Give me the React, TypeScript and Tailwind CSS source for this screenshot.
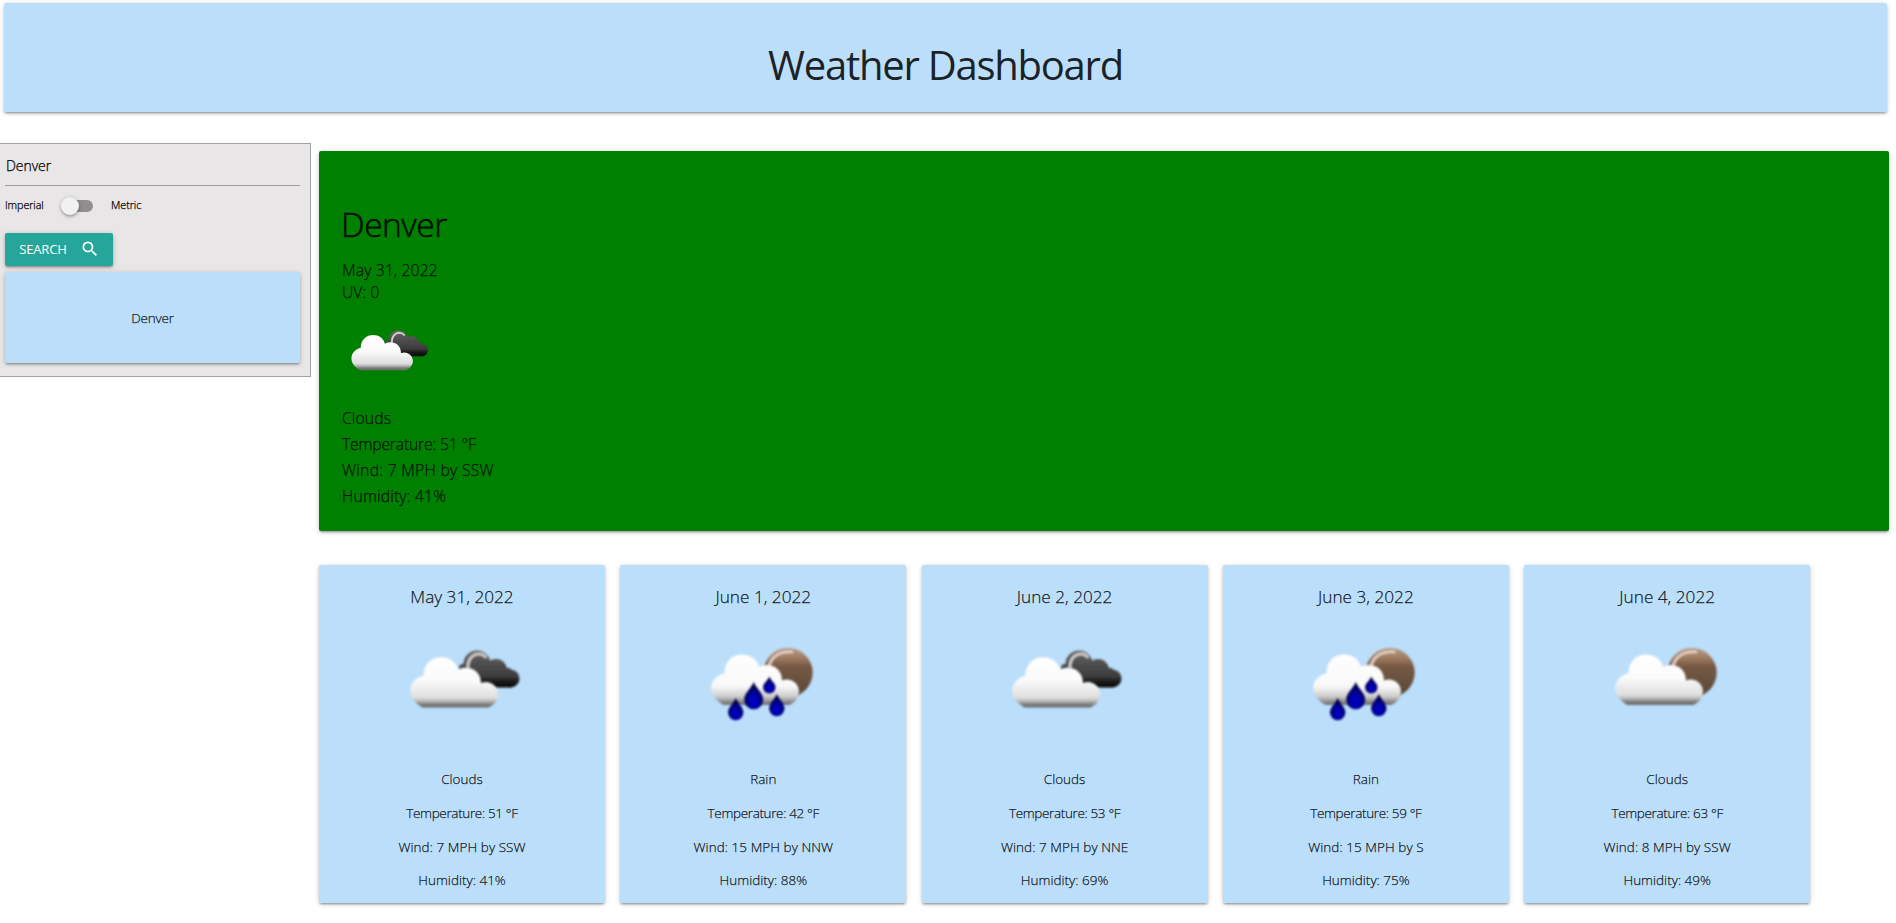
type Kind = 'overcast' | 'rain' | 'broken';

const forecast: { date: string; kind: Kind; label: string; temp: number; wind: string; humidity: number }[] = [
  { date: 'May 31, 2022', kind: 'overcast', label: 'Clouds', temp: 51, wind: '7 MPH by SSW', humidity: 41 },
  { date: 'June 1, 2022', kind: 'rain', label: 'Rain', temp: 42, wind: '15 MPH by NNW', humidity: 88 },
  { date: 'June 2, 2022', kind: 'overcast', label: 'Clouds', temp: 53, wind: '7 MPH by NNE', humidity: 69 },
  { date: 'June 3, 2022', kind: 'rain', label: 'Rain', temp: 59, wind: '15 MPH by S', humidity: 75 },
  { date: 'June 4, 2022', kind: 'broken', label: 'Clouds', temp: 63, wind: '8 MPH by SSW', humidity: 49 },
];

const cardShadow =
  'rounded-[2px] shadow-[0_2px_2px_0_rgba(0,0,0,0.14),0_3px_1px_-2px_rgba(0,0,0,0.12),0_1px_5px_0_rgba(0,0,0,0.2)]';

function Drop({ x, top, r, bottom }: { x: number; top: number; r: number; bottom: number }) {
  const cy = bottom - r;
  return (
    <path
      d={`M${x} ${top} C${x + r * 0.35} ${top + r * 0.8} ${x + r} ${cy - r * 0.7} ${x + r} ${cy} A${r} ${r} 0 0 1 ${x - r} ${cy} C${x - r} ${cy - r * 0.7} ${x - r * 0.35} ${top + r * 0.8} ${x} ${top}Z`}
      fill="url(#drop)"
    />
  );
}

function WeatherIcon({ kind, size }: { kind: Kind; size: number }) {
  const lift = kind === 'overcast' ? 0 : -2.6;
  return (
    <svg width={size} height={size} viewBox="0 0 130 130" className="block shrink-0">
      <defs>
        <linearGradient id="cloud" gradientUnits="userSpaceOnUse" x1="0" y1="27" x2="0" y2="78">
          <stop offset="0" stopColor="#ffffff" />
          <stop offset="0.45" stopColor="#fbfbfb" />
          <stop offset="0.8" stopColor="#dedede" />
          <stop offset="0.87" stopColor="#b4b4b4" />
          <stop offset="0.93" stopColor="#7a7a7a" />
          <stop offset="1" stopColor="#666666" />
        </linearGradient>
        <linearGradient id="rainCloud" gradientUnits="userSpaceOnUse" x1="0" y1="27" x2="0" y2="76">
          <stop offset="0" stopColor="#ffffff" />
          <stop offset="0.65" stopColor="#f8f8f8" />
          <stop offset="0.86" stopColor="#cccccc" />
          <stop offset="1" stopColor="#777777" />
        </linearGradient>
        <linearGradient id="dark" gradientUnits="userSpaceOnUse" x1="0" y1="20" x2="0" y2="58">
          <stop offset="0" stopColor="#686868" />
          <stop offset="0.4" stopColor="#4c4c4c" />
          <stop offset="0.7" stopColor="#3c3c3c" />
          <stop offset="0.85" stopColor="#161616" />
          <stop offset="1" stopColor="#050505" />
        </linearGradient>
        <linearGradient id="sun" x1="0" y1="0" x2="0" y2="1">
          <stop offset="0" stopColor="#b99c88" />
          <stop offset="0.2" stopColor="#a07c62" />
          <stop offset="0.38" stopColor="#755843" />
          <stop offset="0.7" stopColor="#675040" />
          <stop offset="1" stopColor="#59452f" />
        </linearGradient>
        <radialGradient id="drop" cx="0.5" cy="0.7" r="0.55">
          <stop offset="0" stopColor="#0000d0" />
          <stop offset="0.5" stopColor="#0000a0" />
          <stop offset="1" stopColor="#020244" />
        </radialGradient>
        <filter id="soft" x="-10%" y="-10%" width="120%" height="120%">
          <feGaussianBlur stdDeviation="0.8" />
        </filter>
      </defs>
      {kind === 'overcast' ? (
        <g filter="url(#soft)">
          <g fill="url(#dark)">
            <circle cx="76" cy="34" r="13.5" />
            <circle cx="95" cy="40" r="11" />
            <circle cx="109.5" cy="48.5" r="9" />
            <rect x="64" y="38" width="45.5" height="19.5" />
            <rect x="58" y="34" width="12" height="12" rx="4" />
          </g>
          <path d="M67 38 C66.5 29 72 23.5 78.5 24 C81.5 24.2 83.5 25.5 84.5 27" fill="none" stroke="#d4d0cd" strokeWidth="2.6" strokeLinecap="round" />
        </g>
      ) : (
        <g filter="url(#soft)">
          <circle cx="86.1" cy="42.6" r="24.6" fill="url(#sun)" />
          <path d="M67 36 C70 25.5 79 20.5 90 22" fill="none" stroke="#e7d3c6" strokeWidth="2.6" strokeLinecap="round" />
        </g>
      )}
      <g filter="url(#soft)">
        <g fill={kind === 'rain' ? 'url(#rainCloud)' : 'url(#cloud)'} transform={`translate(-0.5 ${lift})`}>
          <path d="M22 77.5 C16 74 9.7 68 9.7 61 C9.7 54 14 48 23 45.5 C23 34 31 27.2 40.5 27.2 C49 27.2 55.5 32 57.5 39.5 C68 34.5 80.5 40 80.5 53 C89 49.5 97.5 56 97.5 64 C97.5 70 94 74.5 88 77.5 Z" />
        </g>
      </g>
      {kind === 'rain' && (
        <g filter="url(#soft)" transform="translate(-1 0)">
          <Drop x={34.7} top={68} r={7.7} bottom={90.3} />
          <Drop x={52.7} top={52} r={9.5} bottom={79.3} />
          <Drop x={68.3} top={46.5} r={6.2} bottom={63.5} />
          <Drop x={75.8} top={64} r={7.7} bottom={86.3} />
        </g>
      )}
    </svg>
  );
}

function Sidebar() {
  return (
    <aside className="mt-[143px] -ml-px h-[234px] w-[312px] shrink-0 border border-[#a3a1a1] bg-[#e8e6e7] pl-[5px]">
      <div className="flex h-[42px] w-[295px] items-center border-b border-[#9e9e9e] pl-px text-[14px] tracking-[-0.05px]">
        <span className="mt-px text-black">Denver</span>
      </div>
      <div className="flex h-[40px] items-center text-[10.8px] text-black">
        <span className="-mt-[2px] w-[39px] tracking-[-0.1px] whitespace-nowrap">Imperial</span>
        <span className="ml-[18px] flex h-[12px] w-[31px] items-center rounded-full bg-[#8f8d8e]">
          <span className="-ml-px h-[18px] w-[18px] shrink-0 rounded-full bg-[#f1f1f1] shadow-[0_2px_2px_0_rgba(0,0,0,0.14),0_1px_4px_0_rgba(0,0,0,0.25)]" />
        </span>
        <span className="-mt-[2px] ml-[18px] tracking-[-0.05px]">Metric</span>
      </div>
      <button className={`mt-[7px] flex h-[33px] w-[108px] items-center bg-[#26a69a] pl-[14px] font-normal text-white [-webkit-text-stroke:0] ${cardShadow}`}>
        <span className="w-[48px] text-[13px] tracking-[-0.15px]">SEARCH</span>
        <svg width="20" height="20" viewBox="0 0 24 24" fill="currentColor" className="-mt-px ml-[13px]">
          <path d="M15.5 14h-.79l-.28-.27A6.471 6.471 0 0 0 16 9.5 6.5 6.5 0 1 0 9.5 16c1.61 0 3.09-.59 4.23-1.57l.27.28v.79l5 4.99L20.49 19l-4.99-5zm-6 0C7.01 14 5 11.99 5 9.5S7.01 5 9.5 5 14 7.01 14 9.5 11.99 14 9.5 14z" />
        </svg>
      </button>
      <div className={`mt-[6px] flex h-[91px] w-[295px] items-center justify-center bg-[#bbdefb] text-[13.5px] tracking-[-0.2px] ${cardShadow}`}>
        <span className="mt-[2px]">Denver</span>
      </div>
    </aside>
  );
}

export default function App() {
  return (
    <div className="h-[923px] w-[1896px] overflow-hidden bg-white font-['Open_Sans',sans-serif] font-light text-black/87 [-webkit-text-stroke:0.25px]">
      <header className={`mt-[3px] ml-[4px] flex h-[109px] w-[1883px] items-center justify-center bg-[#bbdefb] ${cardShadow}`}>
        <h1 className="mt-[14px] text-[40px] leading-[50px] font-normal tracking-[-1.25px] [-webkit-text-stroke:0]">Weather Dashboard</h1>
      </header>
      <div className="-mt-[112px] flex">
        <Sidebar />
        <main className="ml-[8px] pt-[151px]">
          <section className={`h-[380px] w-[1570px] bg-[green] pl-[23px] text-[15.75px] ${cardShadow}`}>
            <h2 className="-ml-px pt-[49px] text-[33.5px] leading-[48px] tracking-[-0.5px] [-webkit-text-stroke:0.6px]">Denver</h2>
            <p className="mt-[11px] leading-[22px] tracking-[0.1px]">May 31, 2022</p>
            <p className="leading-[22px]">UV: 0</p>
            <div className="mt-[13px] ml-[3px] h-[89px]">
              <WeatherIcon kind="overcast" size={91} />
            </div>
            <p className="leading-[26px] tracking-[0.1px]">Clouds</p>
            <p className="leading-[26px] tracking-[-0.2px]">Temperature: 51 °F</p>
            <p className="leading-[26px] tracking-[0.25px]">Wind: 7 MPH by SSW</p>
            <p className="leading-[26px] tracking-[0.15px]">Humidity: 41%</p>
          </section>
          <section className="mt-[34px] flex gap-[15.3px]">
            {forecast.map((day) => (
              <article key={day.date} className={`flex h-[338px] w-[286px] flex-col items-center bg-[#bbdefb] text-[13.5px] ${cardShadow}`}>
                <h3 className="mt-[17px] text-[17.2px] leading-[30px]">{day.date}</h3>
                <div className="mt-[18px] ml-[7px] h-[133px]">
                  <WeatherIcon kind={day.kind} size={130} />
                </div>
                <p className="-mt-px leading-[34px]">{day.label}</p>
                <p className="leading-[34px] tracking-[-0.35px]">Temperature: {day.temp} °F</p>
                <p className="leading-[34px] tracking-[0.05px]">Wind: {day.wind}</p>
                <p className="leading-[33px]">Humidity: {day.humidity}%</p>
              </article>
            ))}
          </section>
        </main>
      </div>
    </div>
  );
}
